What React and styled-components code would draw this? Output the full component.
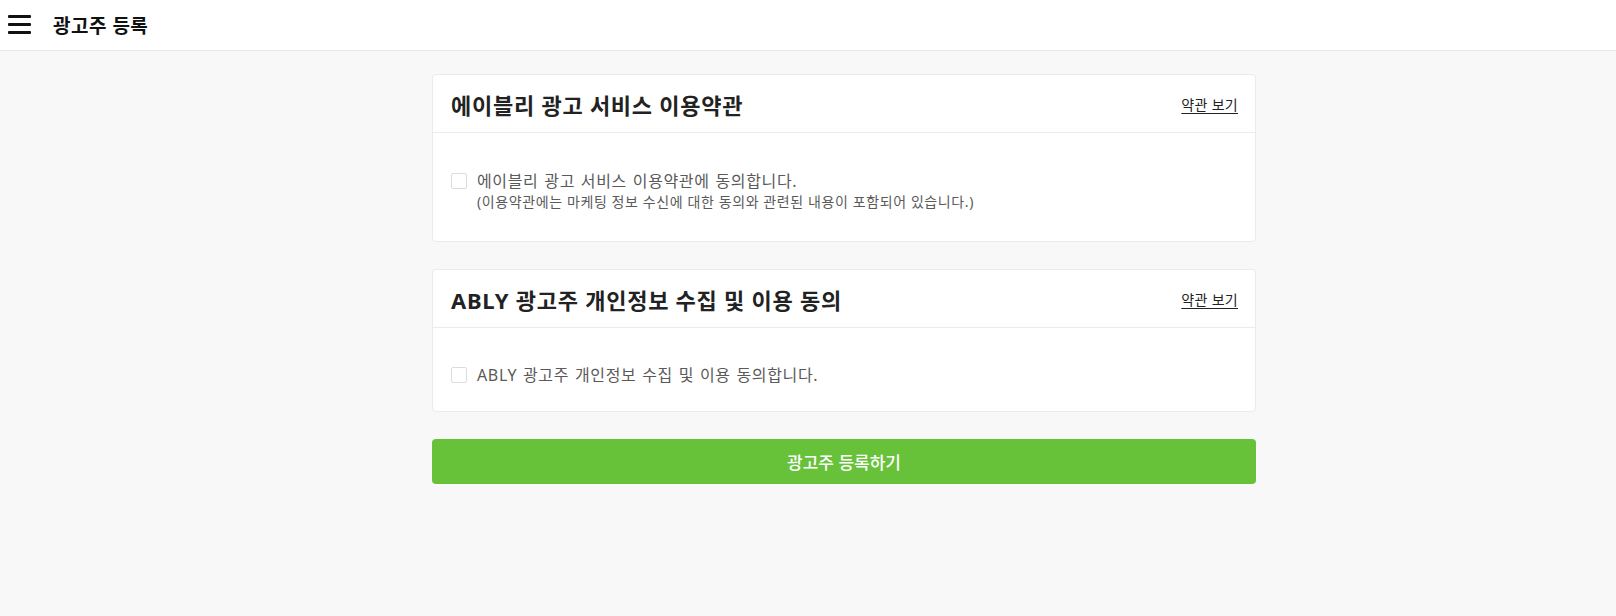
import styled, { createGlobalStyle } from "styled-components";

const GlobalStyle = createGlobalStyle`
  html, body {
    margin: 0;
    padding: 0;
    background: #f8f8f8;
    font-family: "Noto Sans", "Noto Sans CJK KR", sans-serif;
  }
  * { box-sizing: border-box; }
`;

const Page = styled.div`
  min-height: 100vh;
  display: flex;
  flex-direction: column;
`;

const Header = styled.header`
  height: 51px;
  display: flex;
  align-items: center;
  gap: 22px;
  padding: 0 0 1px 8px;
  background: #fff;
  border-bottom: 1px solid #e6e6e6;
`;

const MenuButton = styled.button`
  width: 23px;
  height: 19px;
  padding: 0;
  border: 0;
  background: none;
  display: flex;
  flex-direction: column;
  justify-content: space-between;
  cursor: pointer;

  span {
    display: block;
    height: 3px;
    background: #111;
    border-radius: 1px;
  }
`;

const PageTitle = styled.h1`
  margin: 0;
  font-size: 19px;
  font-weight: 700;
  letter-spacing: 0.5px;
  color: #111;
`;

const Main = styled.main`
  flex: 1;
  padding: 23px 0 40px 72px;
`;

const Column = styled.div`
  width: 824px;
  margin: 0 auto;
  display: flex;
  flex-direction: column;
  gap: 27px;
`;

const Card = styled.section`
  background: #fff;
  border: 1px solid #ebebeb;
  border-radius: 4px;
`;

const CardHeader = styled.div`
  height: 58px;
  display: flex;
  align-items: center;
  justify-content: space-between;
  padding: 0 17px 0 18px;
  border-bottom: 1px solid #ebebeb;
`;

const CardTitle = styled.h2`
  margin: 0;
  font-size: 22px;
  font-weight: 700;
  color: #222;
  letter-spacing: 0.75px;
`;

const TermsLink = styled.a`
  font-size: 14px;
  letter-spacing: 0.3px;
  color: #222;
  text-decoration: underline;
  text-underline-offset: 3px;
  cursor: pointer;
`;

const CardBody = styled.div`
  padding: ${(p) => p.$pad};
`;

const CheckRow = styled.label`
  display: flex;
  align-items: flex-start;
  gap: 10px;
  cursor: pointer;
`;

const Box = styled.span`
  flex: none;
  width: 16px;
  height: 16px;
  margin-top: 4px;
  border: 1px solid #dcdcdc;
  border-radius: 2px;
  background: #fff;
`;

const Texts = styled.div`
  display: flex;
  flex-direction: column;
`;

const Label = styled.span`
  font-size: 16px;
  line-height: 24px;
  letter-spacing: 0.65px;
  word-spacing: 1px;
  color: #5a5a5a;
`;

const Note = styled.span`
  font-size: 14px;
  line-height: 20px;
  letter-spacing: 0.6px;
  color: #5a5a5a;
  margin-top: -1px;
`;

const SubmitButton = styled.button`
  height: 45px;
  border: 0;
  border-radius: 4px;
  background: #67c23a;
  color: #fff;
  font-family: inherit;
  font-size: 17px;
  font-weight: 500;
  cursor: pointer;
`;

const terms = [
  {
    title: "에이블리 광고 서비스 이용약관",
    label: "에이블리 광고 서비스 이용약관에 동의합니다.",
    note: "(이용약관에는 마케팅 정보 수신에 대한 동의와 관련된 내용이 포함되어 있습니다.)",
    pad: "36px 18px 29px",
  },
  {
    title: "ABLY 광고주 개인정보 수집 및 이용 동의",
    label: "ABLY 광고주 개인정보 수집 및 이용 동의합니다.",
    pad: "35px 18px 24px",
  },
];

const App = () => {
  return (
    <>
      <GlobalStyle />
      <Page>
        <Header>
          <MenuButton aria-label="menu">
            <span />
            <span />
            <span />
          </MenuButton>
          <PageTitle>광고주 등록</PageTitle>
        </Header>
        <Main>
          <Column>
            {terms.map((t) => (
              <Card key={t.title}>
                <CardHeader>
                  <CardTitle>{t.title}</CardTitle>
                  <TermsLink>약관 보기</TermsLink>
                </CardHeader>
                <CardBody $pad={t.pad}>
                  <CheckRow>
                    <Box />
                    <Texts>
                      <Label>{t.label}</Label>
                      {t.note && <Note>{t.note}</Note>}
                    </Texts>
                  </CheckRow>
                </CardBody>
              </Card>
            ))}
            <SubmitButton>광고주 등록하기</SubmitButton>
          </Column>
        </Main>
      </Page>
    </>
  );
};

export default App;
